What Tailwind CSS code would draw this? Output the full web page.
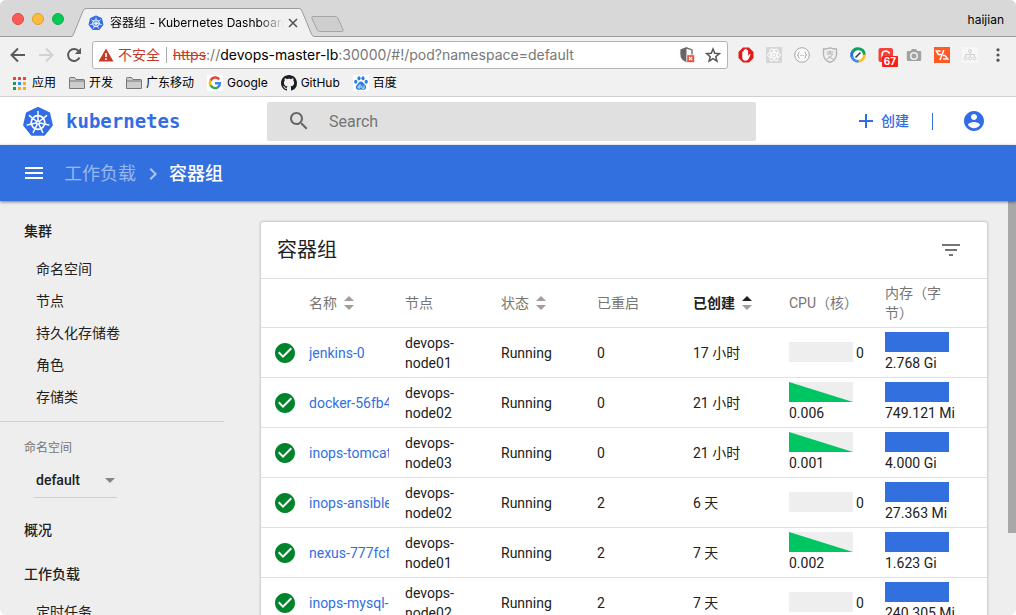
<!DOCTYPE html>
<html lang="zh-CN">
<head>
<meta charset="utf-8">
<title>容器组 - Kubernetes Dashboard</title>
<script src="https://cdn.jsdelivr.net/npm/@tailwindcss/browser@4"></script>
</head>
<body class="bg-white">
<svg class="hidden" aria-hidden="true">
  <symbol id="k8s" viewBox="0 0 32 32">
    <path d="M16 2 26.9 7.3 29.7 19.1 22.1 28.6H9.9L2.3 19.1 5.1 7.3Z" fill="#326de6" stroke="#326de6" stroke-width="2.400" stroke-linejoin="round"/>
    <g fill="none" stroke="#fff" stroke-width="1.5" stroke-linecap="round">
      <circle cx="16" cy="16.5" r="6.8" stroke-width="1.8"/>
      <circle cx="16" cy="16.5" r="1.6"/>
      <path id="spoke" d="M16 14.5V5.5"/>
      <use href="#spoke" transform="rotate(51.4 16 16.5)"/>
      <use href="#spoke" transform="rotate(102.9 16 16.5)"/>
      <use href="#spoke" transform="rotate(154.3 16 16.5)"/>
      <use href="#spoke" transform="rotate(205.7 16 16.5)"/>
      <use href="#spoke" transform="rotate(257.1 16 16.5)"/>
      <use href="#spoke" transform="rotate(308.6 16 16.5)"/>
    </g>
  </symbol>
  <symbol id="folder" viewBox="0 0 16 16"><path d="M.5 13.5V3.2q0-.7.7-.7H5.600L7 4.500h7.800q.7 0 .7.700v8.300q0 0-.7 0H1.200q-.7 0-.7-.5Z" fill="#cdcdcd" stroke="#777"/><path d="M1 6h14" stroke="#777"/></symbol>
  <symbol id="ok" viewBox="0 0 24 24"><path fill="#00842b" d="M12 2C6.480 2 2 6.480 2 12s4.480 10 10 10 10-4.480 10-10S17.520 2 12 2zm-2 15l-5-5 1.410-1.410L10 14.170l7.590-7.590L19 8l-9 9z"/></symbol>
  <symbol id="sort" viewBox="0 0 10 14"><path d="M0 5 5 0l5 5Z"/><path fill="#9e9e9e" d="M0 9h10l-5 5Z"/></symbol>
  <symbol id="spark" viewBox="0 0 64 20"><path fill="#eee" d="M0 0h64v20H0z"/><path fill="#00c563" d="M0 0 64 20H0Z"/></symbol>
</svg>

<div class="flex h-screen flex-col overflow-hidden rounded-md bg-[#eee] font-['Roboto','Noto_Sans_CJK_SC',sans-serif] text-sm text-[#212121]">

  <!-- Browser window -->
  <div class="shrink-0 border-b border-[#cfcfcf] bg-[#f1f1f1] font-['Inter','Noto_Sans_CJK_SC',sans-serif] text-xs text-black">
    <div class="flex h-[37px] items-end border-b border-[#9b9b9b] bg-[#d8d8d8]">
      <div class="flex gap-2 self-start pt-[13px] pl-3">
        <span class="size-3 rounded-full border border-[#e2463f] bg-[#fc5b57]"></span>
        <span class="size-3 rounded-full border border-[#e0a030] bg-[#fdbc40]"></span>
        <span class="size-3 rounded-full border border-[#0eaf45] bg-[#06c955]"></span>
      </div>
      <div class="relative -mb-px ml-2 flex h-[29px] w-[242px] items-center pl-4" role="tab" aria-selected="true">
        <svg class="absolute inset-0" width="242" height="29" viewBox="0 0 242 29"><path d="M0 28.500C1 28 1 27 2 25L11 3Q12 .5 14 .5H227Q229 .5 230 3L239 25Q240 28 242 28.500V29H0Z" fill="#f1f1f1"/><path d="M0 28.500C1 28 1 27 2 25L11 3Q12 .5 14 .5H227Q229 .5 230 3L239 25Q240 28 242 28.500" fill="none" stroke="#9b9b9b"/></svg>
        <svg class="relative size-4 shrink-0"><use href="#k8s"/></svg>
        <span class="relative ml-1.5 w-[174px] overflow-hidden bg-linear-to-r from-black from-85% to-transparent bg-clip-text whitespace-nowrap text-transparent">容器组 - Kubernetes Dashboard</span>
        <button class="relative ml-1" aria-label="关闭标签页"><svg class="size-[10px]" viewBox="0 0 10 10" stroke="#555" stroke-width="1.600"><path d="M1 1l8 8M9 1 1 9"/></svg></button>
      </div>
      <button class="-ml-1 self-start pt-[15px]" aria-label="新标签页"><svg width="35" height="18" viewBox="0 0 35 18"><path d="M3 1.500H25Q27 1.500 28 3.500L33 14.500Q34 16.500 32 16.500H10Q8 16.500 7 14.500L2 3.500Q1 1.500 3 1.500Z" fill="#cecece" stroke="#a5a5a5"/></svg></button>
      <span class="mr-3 mb-2 ml-auto">haijian</span>
    </div>

    <div class="flex items-center pt-1 pr-1">
      <div class="flex w-[92px] pl-1 text-[#5a5a5a]">
        <button class="flex w-7 justify-center" aria-label="后退"><svg class="size-4" viewBox="0 0 16 16" fill="none" stroke="currentColor" stroke-width="2"><path d="M15 8H2M8 1.500 1.500 8 8 14.500"/></svg></button>
        <button class="flex w-7 justify-center text-[#d2d2d2]" aria-label="前进"><svg class="size-4" viewBox="0 0 16 16" fill="none" stroke="currentColor" stroke-width="2"><path d="M1 8h13M8 1.500 14.500 8 8 14.500"/></svg></button>
        <button class="flex w-7 justify-center" aria-label="重新加载"><svg class="size-4" viewBox="0 0 16 16" fill="none" stroke="currentColor" stroke-width="2"><path d="M13.500 10.500A6 6 0 1 1 12.800 4.200"/><path d="M15 .8V7H8.800Z" fill="currentColor" stroke="none"/></svg></button>
      </div>
      <div class="flex h-7 min-w-0 flex-1 items-center rounded-[3px] border border-[#b4b4b4] bg-white pr-1.5 pl-[5px] text-sm">
        <svg class="h-[14px] w-4" viewBox="0 0 16 14"><path fill="#c53929" d="M8 .5 15.500 13.500H.5Z"/><path fill="#fff" d="M7.200 5h1.600v4H7.200zM7.200 10.300h1.600v1.600H7.200z"/></svg>
        <span class="ml-1 text-[#c53929]">不安全</span>
        <span class="mx-1.5 h-4 w-px bg-[#aaa]"></span>
        <div class="flex-1 truncate text-sm text-[#777]" role="textbox" contenteditable="true" spellcheck="false" aria-label="地址"><span class="text-[#c53929] line-through">https</span>://<span class="text-black">devops-master-lb</span>:30000/#!/pod?namespace=default</div>
        <button class="mr-2.5" aria-label="已拦截"><svg class="size-4" viewBox="0 0 16 16"><path d="M7.500.800 13 3V7C13 11 10.500 13.500 7.500 14.500 4.500 13.500 2 11 2 7V3Z" fill="#fff" stroke="#666" stroke-width="1.300"/><path d="M7.500 1V14.500C4.500 13.500 2 11 2 7V3Z" fill="#666"/><path fill="#e35545" stroke="#fff" stroke-width=".6" d="M7.800 7.800H15.500V15.500H7.800z"/><path d="m10 10 3.200 3.200M13.200 10 10 13.200" stroke="#fff" stroke-width="1.100"/></svg></button>
        <button aria-label="收藏"><svg class="size-4" viewBox="0 0 24 24" fill="none" stroke="#555" stroke-width="2.200"><path d="m12 3 2.600 6.500 7 .5-5.400 4.500 1.700 6.800L12 17.600l-5.900 3.700 1.700-6.800L2.400 10l7-.5Z"/></svg></button>
      </div>
      <div class="ml-1 flex shrink-0">
        <button class="flex w-7 justify-center" aria-label="广告拦截"><svg class="size-4" viewBox="0 0 16 16"><path fill="#e01b1b" d="M5 .5h6L15.500 5v6L11 15.500H5L.5 11V5Z"/><path fill="#fff" d="M4.300 5q0-.7.7-.7t.7.700V3.200q0-.7.700-.7t.7.700V2.600q0-.8.800-.8t.8.800v1q0-.7.7-.7t.7.700V9l1-1.600q.6-.7 1.200-.2.400.4 0 1L10.500 12q-.8 1.700-3 1.700-3.200 0-3.200-3.200Z"/></svg></button>
        <button class="flex w-7 justify-center" aria-label="React 工具"><svg class="size-4" viewBox="0 0 16 16" fill="none" stroke="#fff"><path fill="#d6d6d6" stroke="none" d="M0 0h16v16H0z"/><ellipse cx="8" cy="8" rx="6.500" ry="2.600"/><ellipse cx="8" cy="8" rx="6.500" ry="2.600" transform="rotate(60 8 8)"/><ellipse cx="8" cy="8" rx="6.500" ry="2.600" transform="rotate(120 8 8)"/><circle cx="8" cy="8" r="1" fill="#fff"/></svg></button>
        <button class="flex w-7 justify-center" aria-label="JSON 工具"><svg class="size-4" viewBox="0 0 16 16" fill="none" stroke="#a8a8a8"><circle cx="8" cy="8" r="7.300" fill="#fafafa"/><path d="M5.500 4.800Q4.300 5 4.500 6.500 4.500 8 3.300 8 4.500 8 4.500 9.500 4.300 11 5.500 11.200M10.500 4.800Q11.700 5 11.500 6.500 11.500 8 12.700 8 11.500 8 11.500 9.500 11.700 11 10.500 11.200M6.300 8.500h.8m.5 0h.8m.5 0h.8"/></svg></button>
        <button class="flex w-7 justify-center" aria-label="支付"><svg class="size-4" viewBox="0 0 16 16" fill="none" stroke="#b4b4b4"><path d="M1.500 2Q5 2 8 .800 11 2 14.500 2V8Q14 13 8 15.500 2 13 1.500 8Z" stroke-width="1.400"/><path d="M4.500 5h7M8 3v4M4.800 7h6Q9.500 10.500 4.800 12M6 8.500Q8 11.500 11.500 12"/></svg></button>
        <button class="flex w-7 justify-center" aria-label="编辑"><svg class="size-4" viewBox="0 0 16 16" fill="none" stroke-width="2.900"><circle cx="8" cy="8" r="6" fill="#fff" stroke="none"/><path d="M2 10A6.300 6.300 0 0 1 2.900 4.300" stroke="#2d6fe0"/><path d="M2.500 5A6.300 6.300 0 0 1 14.300 8" stroke="#12a05c"/><path d="M14.300 7.500A6.300 6.300 0 0 1 8 14.300" stroke="#fbc12d"/><path d="M8.500 14.300A6.300 6.300 0 0 1 1.800 9" stroke="#3c8bf0"/><path d="m5.500 10.500 5-5" stroke="#444" stroke-width="1.700"/></svg></button>
        <button class="relative flex w-7 justify-center" aria-label="67 条通知"><svg class="size-4" viewBox="0 0 16 16" fill="none"><rect x=".5" y="1" width="14.500" height="14" rx="2" fill="#f04438"/><path d="M11.500 6.500Q10.500 4 7.500 4 4 4.200 4 8t3 5" stroke="#fff" stroke-width="1.600"/></svg><span class="absolute top-[9px] left-2.5 w-4 rounded-[1px] bg-[#fa1e14] text-center text-[10px] leading-[11px] font-bold text-white">67</span></button>
        <button class="flex w-7 justify-center" aria-label="截图"><svg class="size-4" viewBox="0 0 16 16" fill="#a2a2a2"><path fill-rule="evenodd" d="M2 4H4.500L6 2h4l1.500 2H14q1.200 0 1.200 1.200v7.600Q15.200 14 14 14H2Q.8 14 .8 12.800V5.200Q.8 4 2 4ZM8 5a4 4 0 1 0 0 8 4 4 0 0 0 0-8Z"/><circle cx="8" cy="9" r="2.500"/></svg></button>
        <button class="flex w-7 justify-center" aria-label="代码工具"><svg class="size-4" viewBox="0 0 16 16" fill="none" stroke="#fff" stroke-width="1.500"><path fill="#ff5a24" stroke="none" d="M0 0h16v16H0z"/><path d="M6.500 4H2.200L4.500 7.500H7M9.800 3 6 13M9 8.500h2l2.800 3.500H9"/></svg></button>
        <button class="flex w-7 justify-center" aria-label="站点地图"><svg class="size-4" viewBox="0 0 16 16" fill="none" stroke="#d2d2d2"><path fill="#f7f7f7" stroke="none" d="M0 0h16v16H0z"/><circle cx="8" cy="4" r="1.500"/><circle cx="3.500" cy="11.500" r="1.500"/><circle cx="8" cy="11.500" r="1.500"/><circle cx="12.500" cy="11.500" r="1.500"/><path d="M8 5.500V10M3.500 10V7.500h9V10"/></svg></button>
        <button class="flex w-7 justify-center" aria-label="菜单"><svg class="size-4" viewBox="0 0 16 16" fill="#555"><circle cx="8" cy="2.800" r="1.600"/><circle cx="8" cy="8" r="1.600"/><circle cx="8" cy="13.200" r="1.600"/></svg></button>
      </div>
    </div>

    <nav class="flex h-[27px] items-center gap-[13px] pl-3">
      <a href="#" class="flex items-center gap-1"><svg class="size-4" viewBox="0 0 16 16"><path fill="#e8453c" d="M1 2h3v3H1zM6 2h3v3H6zM11 2h3v3h-3z"/><path fill="#0f9d58" d="M1 7h3v3H1zM1 12h3v3H1z"/><path fill="#4285f4" d="M6 7h3v3H6z"/><path fill="#f9a825" d="M11 7h3v3h-3zM6 12h3v3H6zM11 12h3v3h-3z"/></svg>应用</a>
      <a href="#" class="flex items-center gap-1"><svg class="size-4"><use href="#folder"/></svg>开发</a>
      <a href="#" class="flex items-center gap-1"><svg class="size-4"><use href="#folder"/></svg>广东移动</a>
      <a href="#" class="flex items-center gap-1"><svg class="size-4" viewBox="0 0 16 16" fill="none" stroke-width="2.400"><path fill="#fff" d="M0 0h16v16H0z"/><path d="M12.200 4.400A5 5 0 0 0 3.600 5.700" stroke="#ea4335"/><path d="M3.700 5.400a5 5 0 0 0 0 5.200" stroke="#fbbc05"/><path d="M3.600 10.300a5 5 0 0 0 7.800 1.500" stroke="#34a853"/><path d="M8 8.200h5A5 5 0 0 1 11.200 12" stroke="#4285f4"/></svg>Google</a>
      <a href="#" class="flex items-center gap-1"><svg class="size-4" viewBox="0 0 16 16"><path fill="#1b1f23" d="M8 0C3.580 0 0 3.580 0 8c0 3.540 2.290 6.530 5.470 7.590.4.070.55-.17.55-.38 0-.19-.01-.82-.01-1.490-2.010.37-2.530-.49-2.690-.94-.09-.23-.48-.94-.82-1.130-.28-.15-.68-.52-.01-.53.63-.01 1.080.58 1.230.82.72 1.210 1.870.87 2.330.66.07-.52.28-.87.51-1.070-1.780-.2-3.640-.89-3.640-3.950 0-.87.31-1.590.82-2.150-.08-.2-.36-1.020.08-2.120 0 0 .67-.21 2.200.82.64-.18 1.320-.27 2-.27s1.360.09 2 .27c1.530-1.040 2.200-.82 2.200-.82.44 1.100.16 1.920.08 2.120.51.56.82 1.270.82 2.150 0 3.070-1.870 3.750-3.650 3.950.29.25.54.73.54 1.480 0 1.070-.01 1.930-.01 2.200 0 .21.15.46.55.38A8.010 8.010 0 0 0 16 8c0-4.420-3.580-8-8-8z"/></svg>GitHub</a>
      <a href="#" class="flex items-center gap-1"><svg class="size-4" viewBox="0 0 16 16" fill="#2a7de1"><path fill="#fff" d="M0 0h16v16H0z"/><ellipse cx="2.800" cy="6.800" rx="1.600" ry="2"/><ellipse cx="6" cy="3.300" rx="1.600" ry="2.100"/><ellipse cx="10" cy="3.300" rx="1.600" ry="2.100"/><ellipse cx="13.200" cy="6.800" rx="1.600" ry="2"/><path d="M8 6.600c2 0 2.600 2 4 3.100 1.900 1.600 1.400 5-1.300 5-1 0-1.700-.3-2.700-.3s-1.700.3-2.700.3c-2.700 0-3.200-3.400-1.300-5C5.400 8.600 6 6.600 8 6.600Z"/><path d="M7 9v4H5.800Q4.800 13 4.800 12t1-1H7M8.800 10.500v2q0 .8.800.8h1.500v-2.800" fill="none" stroke="#fff" stroke-width=".8"/></svg>百度</a>
    </nav>
  </div>

  <!-- Dashboard header -->
  <header class="flex h-12 shrink-0 items-center bg-white">
    <a href="#" class="flex w-[267px] shrink-0 items-center gap-3 pt-0.5 pl-[22px] font-['DejaVu_Sans_Mono',monospace] text-[19px] font-bold text-[#326de6]"><svg class="size-8"><use href="#k8s"/></svg>kubernetes</a>
    <label class="flex h-[39px] min-w-0 flex-1 items-center gap-[18px] rounded-[2px] bg-[#e0e0e0] pl-5">
      <svg class="size-6 shrink-0" viewBox="0 0 24 24" fill="#666"><path d="M15.500 14h-.79l-.28-.27C15.410 12.590 16 11.110 16 9.500 16 5.910 13.090 3 9.500 3S3 5.910 3 9.500 5.910 16 9.500 16c1.610 0 3.090-.59 4.230-1.570l.27.28v.79l5 4.990L20.490 19l-4.990-5zm-6 0C7.010 14 5 11.990 5 9.500S7.010 5 9.500 5 14 7.010 14 9.500 11.990 14 9.500 14z"/></svg>
      <input type="search" placeholder="Search" aria-label="Search" class="min-w-0 flex-1 bg-transparent pt-0.5 text-base outline-none placeholder:text-[#757575]">
    </label>
    <div class="flex w-[260px] shrink-0 items-center justify-end pr-[30px] text-[#326de6]">
      <button class="flex items-center gap-[3px] font-medium"><svg class="size-6" viewBox="0 0 24 24" fill="currentColor"><path d="M19 13h-6v6h-2v-6H5v-2h6V5h2v6h6v2z"/></svg>创建</button>
      <span class="mr-[29px] ml-[23px] h-[17px] w-px bg-[#326de6]"></span>
      <button aria-label="账户"><svg class="size-6" viewBox="0 0 24 24" fill="currentColor"><path d="M12 2C6.480 2 2 6.480 2 12s4.480 10 10 10 10-4.480 10-10S17.520 2 12 2zm0 3c1.660 0 3 1.340 3 3s-1.340 3-3 3-3-1.340-3-3 1.340-3 3-3zm0 14.200c-2.500 0-4.710-1.280-6-3.220.03-1.990 4-3.080 6-3.080 1.990 0 5.970 1.090 6 3.080-1.290 1.940-3.500 3.220-6 3.220z"/></svg></button>
    </div>
  </header>
  <div class="z-10 flex h-14 shrink-0 items-center bg-[#326fdf] pl-[22px] text-lg text-white shadow-[0_1px_3px_rgba(0,0,0,0.5)]">
    <button aria-label="导航菜单"><svg class="size-6" viewBox="0 0 24 24" fill="currentColor"><path d="M3 18h18v-2H3v2zm0-5h18v-2H3v2zm0-7v2h18V6H3z"/></svg></button>
    <nav class="flex items-center pt-0.5 pl-[18px]">
      <a href="#" class="text-white/50">工作负载</a>
      <svg class="mr-1 ml-[5px] size-6 opacity-60" viewBox="0 0 24 24" fill="currentColor"><path d="M10 6 8.590 7.410 13.170 12l-4.580 4.590L10 18l6-6z"/></svg>
      <h1 class="font-medium">容器组</h1>
    </nav>
  </div>

  <!-- Dashboard body -->
  <div class="flex min-h-0 flex-1 overflow-hidden">
    <nav class="w-56 shrink-0 pt-2">
      <a href="#" class="flex h-11 items-center pl-6 font-medium">集群</a>
      <a href="#" class="flex h-8 items-center pl-9">命名空间</a>
      <a href="#" class="flex h-8 items-center pl-9">节点</a>
      <a href="#" class="flex h-8 items-center pl-9">持久化存储卷</a>
      <a href="#" class="flex h-8 items-center pl-9">角色</a>
      <a href="#" class="flex h-8 items-center pl-9">存储类</a>
      <div class="mt-2 border-t border-[#cfcfcf] pt-4 pb-2.5">
        <label for="ns" class="block pl-6 text-xs leading-5 text-[#757575]">命名空间</label>
        <div class="relative mt-1.5 ml-[34px] w-[83px]">
          <select id="ns" class="h-[34px] w-full appearance-none border-b border-[#cfcfcf] pb-0.5 pl-0.5 font-medium"><option>default</option></select>
          <svg class="pointer-events-none absolute top-3.5 right-0.5 h-[5px] w-[10px]" viewBox="0 0 10 5" fill="#858585"><path d="M0 0h10L5 5z"/></svg>
        </div>
      </div>
      <a href="#" class="flex h-11 items-center pl-6 font-medium">概况</a>
      <a href="#" class="flex h-11 items-center pl-6 font-medium">工作负载</a>
      <a href="#" class="flex h-8 items-center pl-9">定时任务</a>
    </nav>

    <main class="min-w-0 flex-1 pt-[21px] pr-[21px] pl-[37px]">
      <section class="rounded-[2px] bg-white shadow-[0_0_2px_1px_rgba(0,0,0,0.16)]">
        <div class="flex h-14 items-center justify-between pr-6 pl-4">
          <h2 class="text-xl">容器组</h2>
          <button aria-label="筛选"><svg class="size-6" viewBox="0 0 24 24" fill="#757575"><path d="M10 18h4v-2h-4v2zM3 6v2h18V6H3zm3 7h12v-2H6v2z"/></svg></button>
        </div>
        <table class="w-full table-fixed border-collapse text-left leading-5">
          <colgroup><col class="w-12"><col class="w-24"><col class="w-24"><col class="w-24"><col class="w-24"><col class="w-24"><col class="w-24"><col></colgroup>
          <thead>
            <tr class="h-[49px] border-y border-[#e0e0e0] text-[#757575] [&>th]:p-0 [&>th]:font-normal">
              <th></th>
              <th><button class="flex items-center gap-[7px]">名称<svg class="h-3.5 w-2.5" fill="#9e9e9e"><use href="#sort"/></svg></button></th>
              <th>节点</th>
              <th><button class="flex items-center gap-[7px]">状态<svg class="h-3.5 w-2.5" fill="#9e9e9e"><use href="#sort"/></svg></button></th>
              <th>已重启</th>
              <th><button class="flex items-center gap-[7px] font-bold text-[#212121]">已创建<svg class="h-3.5 w-2.5" fill="#212121"><use href="#sort"/></svg></button></th>
              <th>CPU（核）</th>
              <th><div class="w-16">内存（字节）</div></th>
            </tr>
          </thead>
          <tbody id="pods"></tbody>
        </table>
      </section>
    </main>
    <div class="w-2 shrink-0"><div class="h-[332px] bg-[#a8a8a8]"></div></div>
  </div>
</div>

<script>
const pods = [
  ["jenkins-0", "01", 0, "17 小时", "0", "2.768 Gi"],
  ["docker-56fb4c", "02", 0, "21 小时", "0.006", "749.121 Mi"],
  ["inops-tomcat-0", "03", 0, "21 小时", "0.001", "4.000 Gi"],
  ["inops-ansible-0", "02", 2, "6 天", "0", "27.363 Mi"],
  ["nexus-777fcf8", "01", 2, "7 天", "0.002", "1.623 Gi"],
  ["inops-mysql-0", "02", 2, "7 天", "0", "240.305 Mi"],
];
document.getElementById("pods").innerHTML = pods.map(([name, node, restarts, age, cpu, mem]) => `
  <tr class="h-[50px] border-b border-[#e0e0e0] [&>td]:p-0">
    <td><svg class="ml-3 size-6" role="img" aria-label="正常"><use href="#ok"/></svg></td>
    <td><a href="#" class="block w-20 overflow-hidden whitespace-nowrap text-[#326fdf]">${name}</a></td>
    <td>devops-<br>node${node}</td>
    <td>Running</td>
    <td>${restarts}</td>
    <td>${age}</td>
    <td>${cpu === "0"
      ? '<div class="flex items-center gap-[3px]"><span class="mb-0.5 h-5 w-16 bg-[#eee]"></span>0</div>'
      : '<svg class="mb-px h-5 w-16"><use href="#spark"/></svg>' + cpu}</td>
    <td><div class="mb-px h-5 w-16 bg-[#326fdf]"></div>${mem}</td>
  </tr>`).join("");
</script>
</body>
</html>
